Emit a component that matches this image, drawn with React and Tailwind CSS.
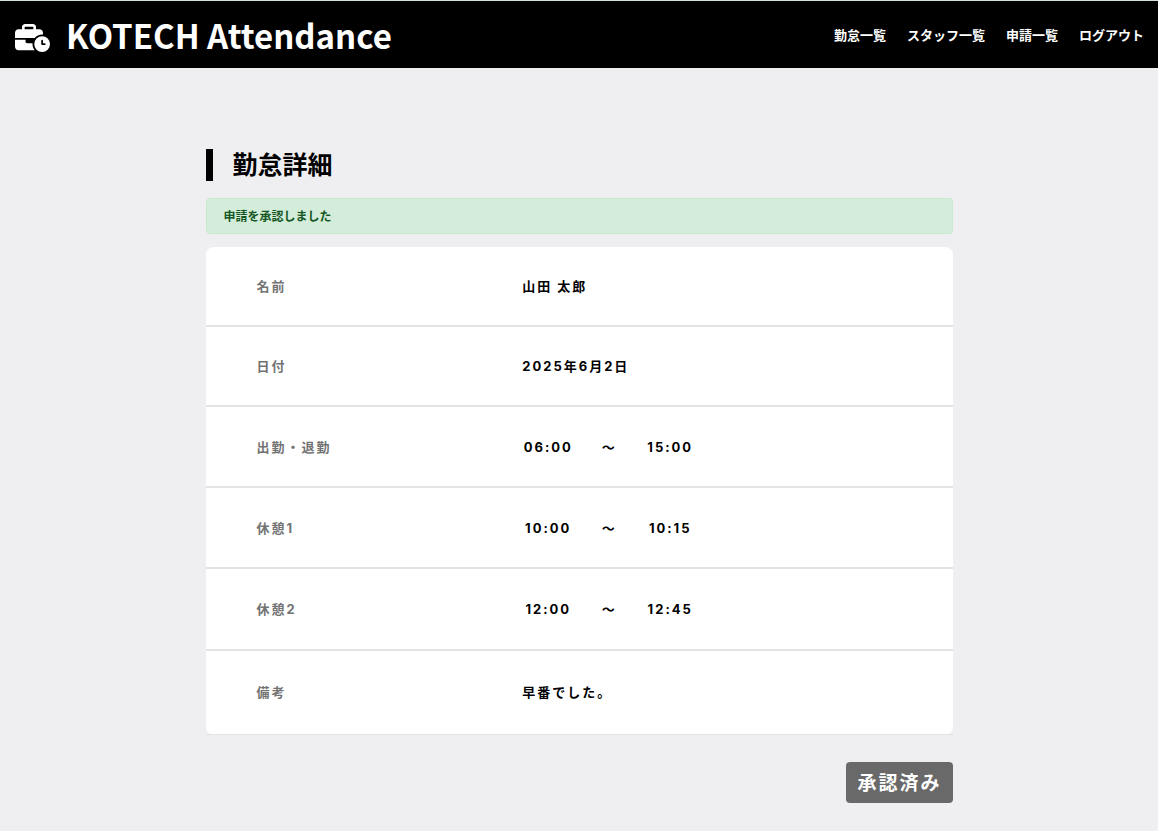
import React from 'react';
import { FaBusinessTime } from 'react-icons/fa6';

const navLinks = [
  { label: '勤怠一覧', href: '#attendance' },
  { label: 'スタッフ一覧', href: '#staff' },
  { label: '申請一覧', href: '#requests' },
  { label: 'ログアウト', href: '#logout' }
];

const rows = [
  { label: '名前', value: '山田 太郎', height: 'h-[79px]' },
  { label: '日付', value: '2025年6月2日', height: 'h-20' },
  { label: '出勤・退勤', start: '06:00', end: '15:00', height: 'h-[81px]' },
  { label: '休憩1', start: '10:00', end: '10:15', height: 'h-[81px]' },
  { label: '休憩2', start: '12:00', end: '12:45', height: 'h-[82px]' },
  { label: '備考', value: '早番でした。', height: 'h-[84px]' }
];

const Header = () => (
  <header className="flex items-center justify-between bg-black border-t border-[#d5e0d8] h-17 pl-[15px] pr-[14px] text-white font-bold font-['Noto_Sans_CJK_JP',sans-serif]">
    <a href="#top" className="flex items-center gap-4">
      <FaBusinessTime className="w-[35px] h-7 mt-[6px]" />
      <span className="text-[33px] leading-[50px]">KOTECH Attendance</span>
    </a>
    <nav className="flex gap-[21px]">
      {navLinks.map((link) => (
        <a key={link.href} href={link.href} className="text-[13px] leading-5">
          {link.label}
        </a>
      ))}
    </nav>
  </header>
);

const TimeRange = ({ start, end }) => (
  <div className="flex items-center">
    <span className="w-14 text-center">{start}</span>
    <span className="w-[66px] text-center">～</span>
    <span className="w-14 text-center">{end}</span>
  </div>
);

const DetailTable = () => (
  <table className="w-full bg-white rounded-lg text-[13px] leading-5 tracking-[2px] font-bold">
    <tbody>
      {rows.map((row) => (
        <tr key={row.label} className={`${row.height} border-b-2 border-[#e3e3e3] last:border-b`}>
          <th scope="row" className="w-[42%] pl-[51px] text-left text-[#737373]">{row.label}</th>
          <td className={row.start ? 'pl-px' : 'pl-[3px]'}>
            {row.start ? <TimeRange start={row.start} end={row.end} /> : row.value}
          </td>
        </tr>
      ))}
    </tbody>
  </table>
);

const App = () => (
  <div className="min-h-screen bg-[#efeff1] text-black font-['Inter','Noto_Sans_CJK_JP',sans-serif]">
    <Header />
    <main className="w-full max-w-[747px] mx-auto pt-[81px] pb-7">
      <h1 className="border-l-[7px] border-black pl-5 text-[25px] leading-8 font-bold">勤怠詳細</h1>
      <div role="status" className="mt-[17px] mb-[13px] px-[17px] pt-[9px] pb-[7px] rounded border border-[#c9e8d1] bg-[#d4edda] text-[#155724] text-xs leading-[18px] font-bold">
        申請を承認しました
      </div>
      <DetailTable />
      <div className="flex justify-end mt-[27px]">
        <button type="button" disabled className="px-[11px] pt-[3px] rounded bg-[#696969] text-white text-[19px] leading-[38px] tracking-[2px] font-bold">
          承認済み
        </button>
      </div>
    </main>
  </div>
);

export default App;
